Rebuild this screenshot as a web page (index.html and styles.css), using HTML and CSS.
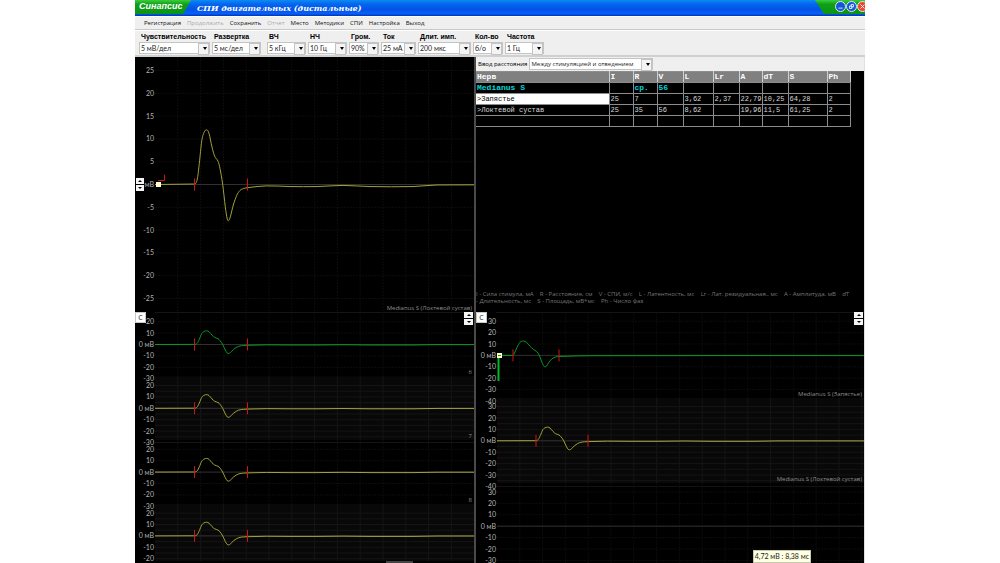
FILE: index.html
```html
<!DOCTYPE html>
<html lang="ru">

<head>
    <meta charset="UTF-8">
    <meta name="viewport" content="width=device-width, initial-scale=1.0">
    <title>Синапсис - СПИ двигательных (дистальные)</title>
    <link rel="stylesheet" href="styles.css">
</head>

<body>
    <div class="app">
        <header class="titlebar">
            <span class="logo">Синапсис</span>
            <h1>СПИ двигательных (дистальные)</h1>
            <div class="winButtons">
                <button type="button" class="win" aria-label="Свернуть">
                    <svg viewBox="0 0 11 11"><path d="M3 7.5h5" /></svg>
                </button>
                <button type="button" class="win" aria-label="Восстановить">
                    <svg viewBox="0 0 11 11"><path d="M5 3h3v3h-3zM3 5h3v3h-3z" /></svg>
                </button>
                <button type="button" class="win close" aria-label="Закрыть">
                    <svg viewBox="0 0 11 11"><path d="M3 3l5 5M8 3l-5 5" /></svg>
                </button>
            </div>
        </header>

        <nav class="menu">
            <a href="#">Регистрация</a>
            <a href="#" class="off">Продолжить</a>
            <a href="#">Сохранить</a>
            <a href="#" class="off">Отчет</a>
            <a href="#">Место</a>
            <a href="#">Методики</a>
            <a href="#">СПИ</a>
            <a href="#">Настройка</a>
            <a href="#">Выход</a>
        </nav>

        <div class="toolbar">
            <div class="field sens">
                <label for="sens">Чувствительность</label>
                <span class="combo"><select id="sens"><option>5 мВ/дел</option></select></span>
            </div>
            <div class="field sweep">
                <label for="sweep">Развертка</label>
                <span class="combo"><select id="sweep"><option>5 мс/дел</option></select></span>
            </div>
            <div class="field freq">
                <label for="vch">ВЧ</label>
                <span class="combo"><select id="vch"><option>5 кГц</option></select></span>
            </div>
            <div class="field freq">
                <label for="nch">НЧ</label>
                <span class="combo"><select id="nch"><option>10 Гц</option></select></span>
            </div>
            <div class="field small">
                <label for="volume">Гром.</label>
                <span class="combo"><select id="volume"><option>90%</option></select></span>
            </div>
            <div class="field current">
                <label for="current">Ток</label>
                <span class="combo"><select id="current"><option>25 мА</option></select></span>
            </div>
            <div class="field pulse">
                <label for="pulse">Длит. имп.</label>
                <span class="combo"><select id="pulse"><option>200 мкс</option></select></span>
            </div>
            <div class="field small">
                <label for="count">Кол-во</label>
                <span class="combo"><select id="count"><option>б/о</option></select></span>
            </div>
            <div class="field freq">
                <label for="rate">Частота</label>
                <span class="combo"><select id="rate"><option>1 Гц</option></select></span>
            </div>
        </div>

        <main>
            <section class="pane left">
                <svg id="mainChart" class="chart" viewBox="0 0 339 255" preserveAspectRatio="xMinYMin meet"></svg>
                <div class="spin axisSpin">
                    <button type="button" aria-label="Вверх"><i class="up"></i></button>
                    <button type="button" aria-label="Вниз"><i class="down"></i></button>
                </div>
            </section>

            <section class="pane right results">
                <div class="distance">
                    <label for="distance">Ввод расстояния</label>
                    <span class="combo wide"><select id="distance"><option>Между стимуляцией и отведением</option></select></span>
                </div>
                <table>
                    <colgroup>
                        <col class="cNerve"><col class="cI"><col class="cI"><col class="cV"><col class="cL">
                        <col class="cV"><col class="cA"><col class="cV"><col class="cS"><col class="cA">
                    </colgroup>
                    <thead>
                        <tr><th>Нерв</th><th>I</th><th>R</th><th>V</th><th>L</th><th>Lr</th><th>A</th><th>dT</th><th>S</th><th>Ph</th></tr>
                    </thead>
                    <tbody>
                        <tr class="nerve"><td>Medianus S</td><td></td><td>ср.</td><td>56</td><td></td><td></td><td></td><td></td><td></td><td></td></tr>
                        <tr><td class="selected">&gt;Запястье</td><td>25</td><td>7</td><td></td><td>3,62</td><td>2,37</td><td>22,79</td><td>10,25</td><td>64,28</td><td>2</td></tr>
                        <tr><td>&gt;Локтевой сустав</td><td>25</td><td>35</td><td>56</td><td>8,62</td><td></td><td>19,96</td><td>11,5</td><td>61,25</td><td>2</td></tr>
                        <tr><td></td><td></td><td></td><td></td><td></td><td></td><td></td><td></td><td></td><td></td></tr>
                    </tbody>
                </table>
                <p class="legend">I - Сила стимула, мА &nbsp;&nbsp; R - Расстояние, см &nbsp;&nbsp; V - СПИ, м/с &nbsp;&nbsp; L - Латентность, мс &nbsp;&nbsp; Lr - Лат. резидуальная., мс &nbsp;&nbsp; A - Амплитуда, мВ &nbsp;&nbsp; dT<br>- Длительность, мс &nbsp;&nbsp; S - Площадь, мВ*мс &nbsp;&nbsp; Ph - Число фаз</p>
            </section>

            <section class="pane left">
                <svg id="leftStrips" class="chart" viewBox="0 0 339 251" preserveAspectRatio="xMinYMin meet"></svg>
                <button type="button" class="clear">C</button>
                <div class="spin">
                    <button type="button" aria-label="Вверх"><i class="up"></i></button>
                    <button type="button" aria-label="Вниз"><i class="down"></i></button>
                </div>
            </section>

            <section class="pane right">
                <svg id="rightStrips" class="chart" viewBox="0 0 388 251" preserveAspectRatio="xMinYMin meet"></svg>
                <button type="button" class="clear">C</button>
                <div class="spin">
                    <button type="button" aria-label="Вверх"><i class="up"></i></button>
                    <button type="button" aria-label="Вниз"><i class="down"></i></button>
                </div>
                <div class="tip">4,72 мВ : 8,38 мс</div>
            </section>
        </main>
    </div>

    <script src="script.js"></script>
</body>

</html>
```
FILE: styles.css
```css
* {
    box-sizing: border-box;
}

body {
    margin: 0;
    background-color: white;
    font-family: "Open Sans", sans-serif;
    font-size: 6px;
    line-height: 8px;
    color: black;
}

.app {
    display: flex;
    flex-direction: column;
    width: 73%;
    height: 100vh;
    margin: 0 auto;
    background-color: #efefef;
    overflow: hidden;
}

button {
    padding: 0;
    border: 0;
    font: inherit;
}

/* title */
.titlebar {
    display: flex;
    align-items: center;
    height: 16px;
    background: linear-gradient(#0b8cf0, #0566f0 25%, #0453e6 60%, #0560fa 85%, #0233b4);
    color: white;
}

.logo {
    width: 56px;
    height: 14px;
    padding-left: 4px;
    align-self: flex-start;
    background: linear-gradient(#3ccc3c, #0ea018 30%, #0b9414);
    clip-path: polygon(0 0, 100% 0, 86% 100%, 0 100%);
    font-family: "Liberation Sans", Arial, sans-serif;
    font-size: 9px;
    font-style: italic;
    font-weight: bold;
    line-height: 13px;
}

h1 {
    flex: 1;
    margin: 0 0 0 6px;
    font-family: "DejaVu Serif", serif;
    font-size: 8px;
    font-style: italic;
    font-weight: bold;
    line-height: 16px;
    white-space: nowrap;
}

.winButtons {
    display: flex;
    align-self: flex-start;
    width: 50px;
    height: 14px;
    padding: 1px 0 0 20px;
    background: linear-gradient(#3ccc3c, #0ea018 30%, #0b9414);
    clip-path: polygon(0 0, 100% 0, 100% 100%, 18% 100%);
}

.win {
    flex: none;
    width: 11px;
    height: 11px;
    border: 1px solid #dce8ff;
    border-radius: 50%;
    background-color: #1456d8;
}

.win.close {
    background-color: #e8482c;
}

.win svg {
    display: block;
    fill: none;
    stroke: white;
}

/* menu and toolbar */
.menu {
    display: flex;
    align-items: center;
    gap: 6px;
    height: 14px;
    padding-left: 9px;
    border-top: 1px solid white;
    border-bottom: 1px solid #c8c8c8;
}

.menu a {
    color: #111;
    text-decoration: none;
}

.menu a.off {
    color: #aaa;
}

.toolbar {
    display: flex;
    gap: 2px;
    height: 27px;
    padding: 2px 0 0 4px;
    border-top: 1px solid white;
    border-bottom: 2px solid #d0d0d0;
    font-family: Lato, sans-serif;
    font-size: 7px;
}

.field label {
    display: block;
    height: 9px;
    padding-left: 2px;
    font-family: "Liberation Sans", Arial, sans-serif;
    font-weight: bold;
    white-space: nowrap;
}

.sens {
    width: 71px;
}

.sweep {
    width: 49px;
    margin-right: 4px;
}

.freq {
    width: 39px;
}

.small {
    width: 30px;
}

.current {
    width: 35px;
}

.pulse {
    width: 53px;
}

.combo {
    display: block;
    position: relative;
    height: 12px;
}

.combo select {
    display: block;
    width: 100%;
    height: 100%;
    padding: 0 0 0 1px;
    border: 1px solid #c4c4c4;
    border-radius: 0;
    appearance: none;
    background-color: white;
    color: #222;
    font: inherit;
}

.combo::before {
    content: "";
    position: absolute;
    top: 1px;
    right: 1px;
    width: 9px;
    height: 10px;
    border: 1px solid #c4c4c4;
    background-color: #f4f4f4;
    pointer-events: none;
}

.combo::after {
    content: "";
    position: absolute;
    top: 5px;
    right: 3px;
    border: solid transparent;
    border-width: 3px 2px 0;
    border-top-color: black;
    pointer-events: none;
}

/* work area */
main {
    flex: 1;
    display: grid;
    grid-template-columns: 341fr 389fr;
    grid-template-rows: 255fr 251fr;
    min-height: 0;
    background-color: black;
}

.pane {
    position: relative;
    min-width: 0;
    min-height: 0;
    overflow: hidden;
}

.left {
    border-right: 2px solid #4a4a4a;
}

.right {
    border-right: 1px solid #e0e0e0;
}

.chart {
    display: block;
    width: 100%;
    height: 100%;
}

.chart text {
    font-family: Lato, sans-serif;
    font-size: 7px;
    fill: #b4b4b4;
    text-anchor: end;
}

.chart .caption {
    font-family: "Open Sans", sans-serif;
    font-size: 6px;
    fill: #8c8c8c;
}

.grid {
    stroke: #0d0d0d;
    stroke-dasharray: 2 1;
}

.band {
    fill: #080808;
}

.bandGrid {
    stroke: #151515;
}

.zero {
    stroke: #303030;
}

.trace {
    fill: none;
    stroke: #a3a33a;
}

.trace.green {
    stroke: #069a26;
}

.mark {
    fill: none;
    stroke: #d01414;
}

.start {
    fill: #ffffd0;
}

.stim {
    fill: none;
    stroke: #00b828;
    stroke-width: 2;
}

.scroll {
    fill: #444;
}

.clear {
    position: absolute;
    top: 0;
    left: 0;
    width: 11px;
    height: 11px;
    border: 1px solid #c8c8c8;
    background-color: white;
    color: #222;
    font-size: 7px;
}

.spin {
    display: flex;
    flex-direction: column;
    gap: 1px;
    position: absolute;
    top: 0;
    right: 1px;
}

.spin button {
    display: flex;
    align-items: center;
    justify-content: center;
    width: 9px;
    height: 6px;
    background-color: #f4f4f4;
}

.axisSpin {
    top: 121px;
    left: 1px;
    right: auto;
}

.axisSpin button {
    width: 8px;
}

.up,
.down {
    border: solid transparent;
    border-width: 0 2px 2px;
    border-bottom-color: black;
}

.down {
    border-width: 2px 2px 0;
    border-top-color: black;
}

/* results */
.results {
    display: flex;
    flex-direction: column;
}

.distance {
    display: flex;
    align-items: center;
    gap: 2px;
    height: 14px;
    padding-left: 2px;
    background-color: #efefef;
    white-space: nowrap;
}

.wide {
    width: 124px;
}

table {
    width: 374px;
    border-collapse: collapse;
    table-layout: fixed;
    font-family: "Liberation Mono", monospace;
    font-size: 7px;
    line-height: 10px;
    color: #d8d8d8;
}

th,
td {
    height: 11px;
    padding: 0 0 0 1px;
    border: 1px solid #8c8c8c;
    border-left-width: 0;
    text-align: left;
    white-space: nowrap;
    overflow: hidden;
}

th {
    border-right-color: #d0d0d0;
    background-color: #808080;
    color: white;
    font-size: 8px;
}

.nerve td {
    color: #00d8d8;
    font-size: 8px;
    font-weight: bold;
}

td.selected {
    background-color: white;
    color: black;
}

.cNerve {
    width: 133px;
}

.cI {
    width: 24px;
}

.cV {
    width: 26px;
}

.cL {
    width: 30px;
}

.cA {
    width: 23px;
}

.cS {
    width: 39px;
}

.legend {
    margin: auto 0 7px;
    line-height: 7px;
    color: #777;
    white-space: nowrap;
}

.tip {
    position: absolute;
    bottom: 0;
    right: 53px;
    padding: 1px 1px 2px;
    border: 1px solid #c8c8b0;
    background-color: #ffffe1;
    color: #222;
    font-family: Lato, sans-serif;
    font-size: 7px;
}
```
FILE: script.js
```js
const NS = "http://www.w3.org/2000/svg";
const DIV = 22.8; // px in one division of the time axis

// [x, mV]
const elbow = [
    [59.7, 0.1], [62.3, 1.2], [64.3, 4.6], [66.7, 9.5], [69, 11.4], [71.7, 12], [74, 11.2], [77, 8.2],
    [79.7, 6.2], [83, 5.1], [85, 3.5], [87.7, 0], [90.3, -4.9], [92.3, -7.6], [93.7, -7.9], [95.3, -7.1],
    [98.3, -4.5], [101.7, -2.4], [105, -1.3], [108.3, -0.9], [112.3, -0.7], [131.7, -0.3], [155, -0.45],
    [182, -0.45], [208, -0.2], [235, -0.45], [278, -0.45], [302, -0.1], [400, -0.1]
];
const wrist = [
    [36.7, 0], [38.5, 2], [41, 7], [44, 11.5], [47.3, 12.6], [50.5, 11.5], [54, 8], [57.5, 5.2], [60.5, 3.5],
    [63, 0.5], [65.5, -5], [67.5, -9], [69, -10], [70.5, -9.4], [73, -6], [76, -3], [79.5, -1.4],
    [84, -0.9], [116, -0.3], [400, -0.2]
];

function add(svg, name, attrs, text) {
    const el = document.createElementNS(NS, name);
    for (const key in attrs) {
        el.setAttribute(key, attrs[key]);
    }
    if (text) {
        el.textContent = text;
    }
    svg.appendChild(el);
}

function line(svg, x1, y1, x2, y2, cls) {
    add(svg, "path", { d: `M${x1} ${y1}L${x2} ${y2}`, class: cls });
}

// smooth curve through all the points
function curve(points, start, zero, scale) {
    const p = [[start, 0], ...points].map(([x, v]) => [x, zero - v * scale]);
    let d = `M${p[0]}L${p[1]}`;
    for (let i = 1; i < p.length - 1; i++) {
        const a = p[i - 1], b = p[i], c = p[i + 1], e = p[i + 2] || c;
        const k = (c[0] - b[0]) / 3;
        const s1 = i == 1 ? 0 : (c[1] - a[1]) / (c[0] - a[0]);
        const s2 = e == c ? 0 : (e[1] - b[1]) / (e[0] - b[0]);
        d += `C${b[0] + k} ${b[1] + s1 * k} ${c[0] - k} ${c[1] - s2 * k} ${c}`;
    }
    return d;
}

function strip(svg, o) {
    const cls = o.band ? "bandGrid" : "grid";
    if (o.band) {
        add(svg, "rect", { x: o.left, y: o.top, width: o.width - o.left, height: o.height, class: "band" });
    }
    for (let x = o.left + DIV; x < o.width; x += DIV) {
        line(svg, x, o.top, x, o.top + o.height, cls);
    }
    for (let v = o.min; v <= o.max; v += o.step / 2) {
        const y = o.zero - v * o.scale;
        if (o.band || v % o.step == 0) {
            line(svg, o.left, y, o.width, y, cls);
        }
    }
    line(svg, o.left, o.zero, o.width, o.zero, "zero");
    for (let v = o.min; v <= o.max; v += o.step) {
        add(svg, "text", { x: o.left - 1, y: o.zero - v * o.scale + 2.5 }, v == 0 ? o.unit : String(v));
    }
    if (o.data) {
        add(svg, "path", { d: curve(o.data, o.left, o.zero, o.scale), class: "trace " + o.color });
        o.marks.forEach(x => line(svg, x, o.zero - 6, x, o.zero + 6, "mark"));
    }
    if (o.caption) {
        add(svg, "text", { x: o.width - 2, y: o.top + o.height - 2, class: "caption" }, o.caption);
    }
}

const main = document.getElementById("mainChart");
strip(main, {
    left: 20, width: 339, top: 0, height: 255, zero: 127.5, scale: 4.56, min: -25, max: 25, step: 5,
    unit: "мВ", data: elbow, color: "", marks: [59.5, 112.5], caption: "Medianus S (Локтевой сустав)"
});
add(main, "path", { d: "M23 123.5h6.500v-6", class: "mark" });
add(main, "rect", { x: 21, y: 125, width: 5, height: 5, class: "start" });

const left = document.getElementById("leftStrips");
line(left, 20, 0.5, 339, 0.5, "bandGrid");
["6", "7", "8", ""].forEach((name, i) => {
    strip(left, {
        left: 20, width: 339, top: 0.5 + i * 63.8, height: 63.8, zero: 32.5 + i * 63.8, scale: 1.14,
        min: i == 3 ? -20 : -30, max: 20, step: 10, unit: "0 мВ", band: i % 2 == 1, data: elbow,
        color: i == 0 ? "green" : "", marks: [59.5, 112.5], caption: name
    });
});
add(left, "rect", { x: 0, y: 249, width: 339, height: 2 });
add(left, "rect", { x: 251, y: 249, width: 27, height: 2, class: "scroll" });

const right = document.getElementById("rightStrips");
line(right, 20, 0.5, 388, 0.5, "bandGrid");
const rows = [
    { data: wrist, color: "green", marks: [37, 83], caption: "Medianus S (Запястье)" },
    { data: elbow, color: "", marks: [60, 112], caption: "Medianus S (Локтевой сустав)" },
    {}
];
rows.forEach((row, i) => {
    strip(right, {
        left: 21, width: 388, top: 0.5 + i * 85.4, height: 85.4, zero: 43.4 + i * 85.4, scale: 1.14,
        min: i == 2 ? -30 : -40, max: 30, step: 10, unit: "0 мВ", band: i == 1, ...row
    });
});
add(right, "path", { d: "M22.500 43v26", class: "stim" });
add(right, "rect", { x: 21, y: 41, width: 5, height: 5, class: "start" });
add(right, "path", { d: "M22 43.500h3", class: "trace green" });
```
